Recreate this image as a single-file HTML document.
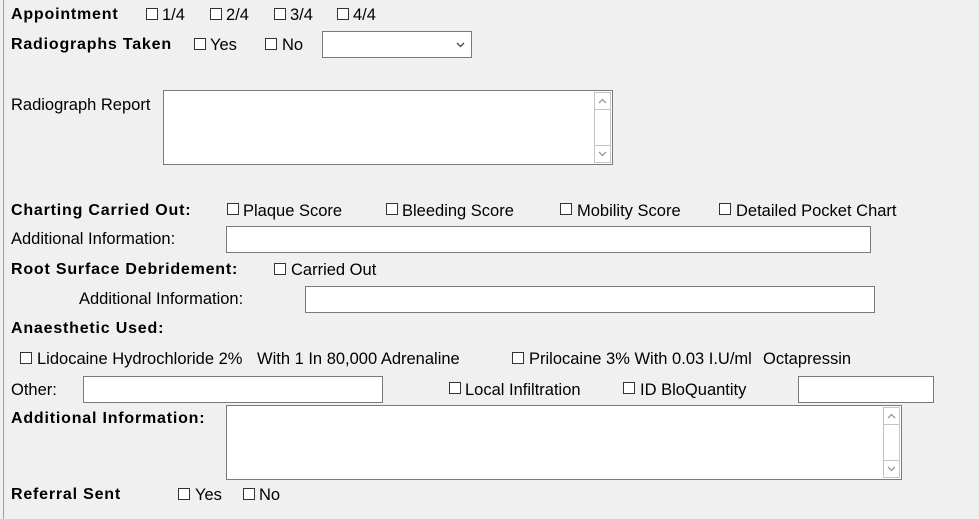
<!DOCTYPE html>
<html><head><meta charset="utf-8"><style>
body{margin:0;width:979px;height:519px;background:#f0f0f0;position:relative;overflow:hidden;font-family:"Liberation Sans",sans-serif;font-size:16.5px;color:#000}
.t{position:absolute;line-height:18px;white-space:nowrap;margin-top:2px}
.b{font-weight:bold;font-size:16px;letter-spacing:0.8px}
.cb{position:absolute;width:10px;height:10px;border:1px solid #333;background:#fff}
.in{position:absolute;background:#fff;border:1px solid #7a7a7a;box-sizing:border-box}
.sb{position:absolute;right:1px;top:1px;bottom:1px;width:17px;border:1px solid #c4c4c4;box-sizing:border-box;background:#fff}
.sb .u,.sb .d{position:absolute;left:0;right:0;height:16px}
.sb .u{top:0;border-bottom:1px solid #c4c4c4}
.sb .d{bottom:0;border-top:1px solid #c4c4c4}
.sb svg{position:absolute;left:3px;top:5px}
</style></head><body>
<div style="position:absolute;left:3px;top:0;width:1px;height:519px;background:#a0a0a0"></div>

<div class="t b" style="left:11px;top:4px">Appointment</div>
<div class="cb" style="left:146px;top:8px"></div><div class="t" style="left:162px;top:4px">1/4</div>
<div class="cb" style="left:210px;top:8px"></div><div class="t" style="left:226px;top:4px">2/4</div>
<div class="cb" style="left:274px;top:8px"></div><div class="t" style="left:290px;top:4px">3/4</div>
<div class="cb" style="left:337px;top:8px"></div><div class="t" style="left:353px;top:4px">4/4</div>

<div class="t b" style="left:11px;top:34px">Radiographs Taken</div>
<div class="cb" style="left:194px;top:38px"></div><div class="t" style="left:210px;top:34px">Yes</div>
<div class="cb" style="left:265px;top:38px"></div><div class="t" style="left:282px;top:34px">No</div>
<div class="in" style="left:322px;top:31px;width:150px;height:27px"><svg style="position:absolute;right:6px;top:10px" width="9" height="6"><path d="M1 1L4.5 4.5L8 1" stroke="#444" fill="none" stroke-width="1.3"/></svg></div>

<div class="t" style="left:11px;top:94px">Radiograph Report</div>
<div class="in" style="left:163px;top:90px;width:450px;height:75px"><div class="sb"><div class="u"><svg width="9" height="6"><path d="M1 5L4.5 1.5L8 5" stroke="#999" fill="none" stroke-width="1.3"/></svg></div><div class="d"><svg width="9" height="6"><path d="M1 1L4.5 4.5L8 1" stroke="#999" fill="none" stroke-width="1.3"/></svg></div></div></div>

<div class="t b" style="left:11px;top:200px">Charting Carried Out:</div>
<div class="cb" style="left:227px;top:203px"></div><div class="t" style="left:243px;top:200px">Plaque Score</div>
<div class="cb" style="left:386px;top:203px"></div><div class="t" style="left:402px;top:200px">Bleeding Score</div>
<div class="cb" style="left:560px;top:203px"></div><div class="t" style="left:577px;top:200px">Mobility Score</div>
<div class="cb" style="left:719px;top:203px"></div><div class="t" style="left:736px;top:200px">Detailed Pocket Chart</div>

<div class="t" style="left:11px;top:228px">Additional Information:</div>
<div class="in" style="left:226px;top:226px;width:645px;height:27px"></div>

<div class="t b" style="left:11px;top:259px">Root Surface Debridement:</div>
<div class="cb" style="left:274px;top:263px"></div><div class="t" style="left:291px;top:259px">Carried Out</div>

<div class="t" style="left:79px;top:288px">Additional Information:</div>
<div class="in" style="left:305px;top:286px;width:570px;height:27px"></div>

<div class="t b" style="left:11px;top:318px">Anaesthetic Used:</div>
<div class="cb" style="left:20px;top:352px"></div><div class="t" style="left:37px;top:348px">Lidocaine Hydrochloride 2%</div>
<div class="t" style="left:257px;top:348px">With 1 In 80,000 Adrenaline</div>
<div class="cb" style="left:512px;top:352px"></div><div class="t" style="left:529px;top:348px">Prilocaine 3% With 0.03 I.U/ml</div>
<div class="t" style="left:763px;top:348px">Octapressin</div>

<div class="t" style="left:11px;top:379px">Other:</div>
<div class="in" style="left:83px;top:376px;width:300px;height:27px"></div>
<div class="cb" style="left:449px;top:382px"></div><div class="t" style="left:465px;top:379px">Local Infiltration</div>
<div class="cb" style="left:623px;top:382px"></div><div class="t" style="left:640px;top:379px">ID BloQuantity</div>
<div class="in" style="left:798px;top:376px;width:136px;height:27px"></div>

<div class="t b" style="left:11px;top:408px">Additional Information:</div>
<div class="in" style="left:226px;top:405px;width:676px;height:75px"><div class="sb"><div class="u"><svg width="9" height="6"><path d="M1 5L4.5 1.5L8 5" stroke="#999" fill="none" stroke-width="1.3"/></svg></div><div class="d"><svg width="9" height="6"><path d="M1 1L4.5 4.5L8 1" stroke="#999" fill="none" stroke-width="1.3"/></svg></div></div></div>

<div class="t b" style="left:11px;top:484px">Referral Sent</div>
<div class="cb" style="left:178px;top:488px"></div><div class="t" style="left:195px;top:484px">Yes</div>
<div class="cb" style="left:243px;top:488px"></div><div class="t" style="left:259px;top:484px">No</div>
</body></html>
